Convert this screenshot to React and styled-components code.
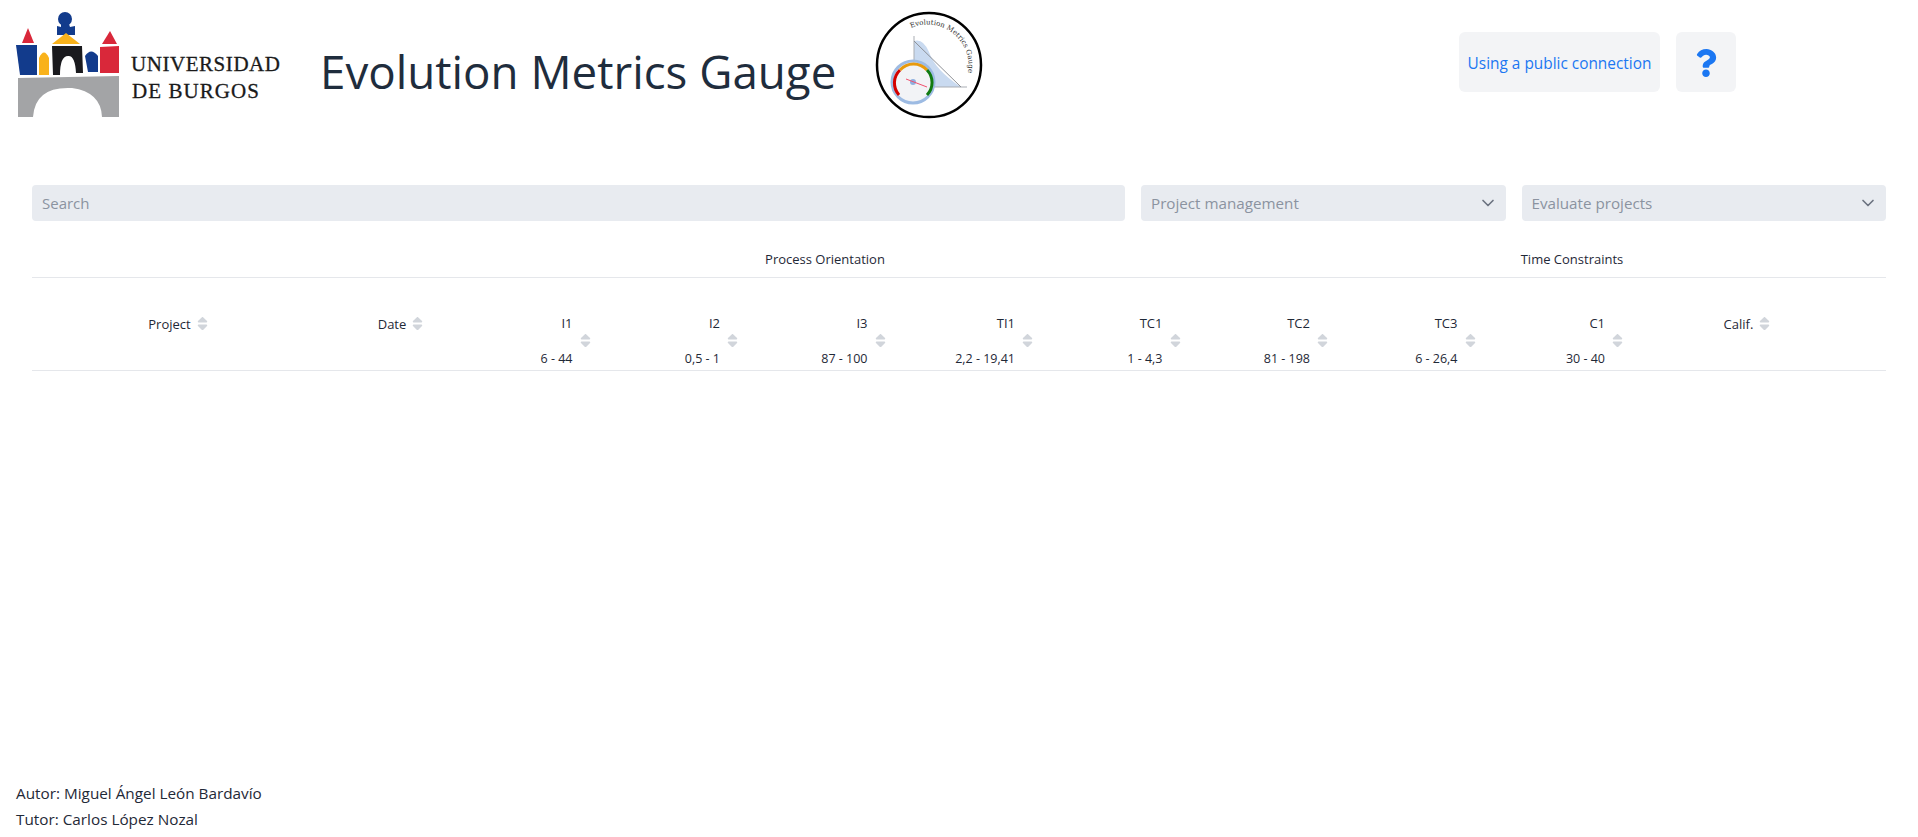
import React from "react";
import styled, { createGlobalStyle } from "styled-components";
import { FaSort, FaQuestion } from "react-icons/fa";
import { FiChevronDown } from "react-icons/fi";

const metrics = [
  { name: "I1", range: "6 - 44" },
  { name: "I2", range: "0,5 - 1" },
  { name: "I3", range: "87 - 100" },
  { name: "TI1", range: "2,2 - 19,41" },
  { name: "TC1", range: "1 - 4,3" },
  { name: "TC2", range: "81 - 198" },
  { name: "TC3", range: "6 - 26,4" },
  { name: "C1", range: "30 - 40" },
];

const UbuLogo = () => (
  <svg width="300" height="130" viewBox="0 0 300 130">
    <circle cx="65" cy="19" r="7" fill="#123b8c" />
    <path d="M61 24h8l1 3 5-1 0 9-18 0 0-9 4 1z" fill="#123b8c" />
    <path d="M52 44 L66 33 L80 44 Z" fill="#f9b21b" />
    <path d="M22 43 L28 28 L34 43 Z" fill="#d9283a" />
    <path d="M16 45 L37 45 L37 75 L20 75 Z" fill="#123b8c" />
    <path d="M39 75 L39 58 Q44 47 49 58 L49 75 Z" fill="#f9b21b" />
    <path d="M52 46 L82 46 L83 73 L76 73 Q75 55 68 56 Q60 56 60 75 L53 75 Z" fill="#1a1a1e" />
    <path d="M85 56 Q91 47 98 56 L98 72 L88 72 Z" fill="#123b8c" />
    <path d="M102 44 L110 31 L117 44 Z" fill="#d9283a" />
    <path d="M100 47 L119 46 L119 73 L100 73 Z" fill="#d9283a" />
    <path d="M18 78 L119 76 L119 117 L102 117 Q101 92 72 88 Q35 86 33 117 L18 117 Z" fill="#a3a4a6" />
    <LogoText x="131" y="71" textLength="149">UNIVERSIDAD</LogoText>
    <LogoText x="132" y="98" textLength="127">DE BURGOS</LogoText>
  </svg>
);

const GaugeLogo = () => (
  <svg width="130" height="130" viewBox="0 0 130 130">
    <defs>
      <path id="ringText" d="M50 28 A41 41 0 1 1 60 106" />
    </defs>
    <circle cx="68" cy="65" r="52" fill="#fff" stroke="#000" strokeWidth="2.5" />
    <text fontFamily="'DejaVu Serif', serif" fontSize="7" fill="#333">
      <textPath href="#ringText">Evolution Metrics Gauge</textPath>
    </text>
    <path d="M53 41 Q62 38 68 52 Q74 70 100 87 L53 87 Z" fill="#c9daf0" />
    <path d="M53 36 L53 87 L106 87" fill="none" stroke="#a9adb3" strokeWidth="1" />
    <path d="M53 41 L100 87" fill="none" stroke="#8d9096" strokeWidth="1" />
    <circle cx="52" cy="82" r="21" fill="#f2f3f6" stroke="#9dbbe3" strokeWidth="3" />
    <path d="M38 95 A18 18 0 0 1 39 70" fill="none" stroke="#d40000" strokeWidth="3" />
    <path d="M39 70 A18 18 0 0 1 66 70" fill="none" stroke="#e89a0c" strokeWidth="3" />
    <path d="M66 70 A18 18 0 0 1 66 95" fill="none" stroke="#107a10" strokeWidth="3" />
    <circle cx="52" cy="82" r="3" fill="#8fb0e0" />
    <path d="M45 79 L66 87" stroke="#f0506e" strokeWidth="1" />
  </svg>
);

const Sort = () => (
  <SortIcon>
    <FaSort />
  </SortIcon>
);

const App = () => {
  return (
    <Page>
      <GlobalStyle />
      <Header>
        <UbuLogo />
        <Title>Evolution Metrics Gauge</Title>
        <GaugeSlot>
          <GaugeLogo />
        </GaugeSlot>
        <Actions>
          <ActionButton>Using a public connection</ActionButton>
          <HelpButton>
            <FaQuestion />
          </HelpButton>
        </Actions>
      </Header>

      <Filters>
        <Search placeholder="Search" />
        <Select>
          Project management
          <FiChevronDown />
        </Select>
        <Select>
          Evaluate projects
          <FiChevronDown />
        </Select>
      </Filters>

      <Table>
        <GroupRow>
          <GroupLabel $offset={673}>Process Orientation</GroupLabel>
          <GroupLabel $offset={507}>Time Constraints</GroupLabel>
        </GroupRow>
        <HeadRow>
          <PlainHead>
            Project <Sort />
          </PlainHead>
          <PlainHead>
            Date <Sort />
          </PlainHead>
          {metrics.map((m) => (
            <MetricHead key={m.name}>
              <MetricName>{m.name}</MetricName>
              <Sort />
              <MetricRange>{m.range}</MetricRange>
            </MetricHead>
          ))}
          <PlainHead>
            Calif. <Sort />
          </PlainHead>
        </HeadRow>
      </Table>

      <Footer>
        <div>Autor: Miguel Ángel León Bardavío</div>
        <div>Tutor: Carlos López Nozal</div>
      </Footer>
    </Page>
  );
};

const GlobalStyle = createGlobalStyle`
  body {
    margin: 0;
    background: #fff;
    font-family: "Open Sans", "Noto Sans", sans-serif;
    color: #1f2937;
  }
`;

const Page = styled.div`
  display: flex;
  flex-direction: column;
  height: 837px;
  overflow: hidden;
`;

const Header = styled.header`
  display: flex;
  align-items: center;
  height: 130px;
  padding-right: 182px;
`;

const LogoText = styled.text`
  font-family: "Liberation Serif", serif;
  font-size: 21px;
  fill: #1a1a1a;
  stroke: #1a1a1a;
  stroke-width: 0.3px;
`;

const Title = styled.h1`
  margin: 12px 0 0 20px;
  width: 520px;
  font-size: 45.7px;
  line-height: 56px;
  font-weight: 400;
  white-space: nowrap;
  color: #1f2d3d;
`;

const GaugeSlot = styled.div`
  display: flex;
  margin-left: 21px;
`;

const Actions = styled.div`
  display: flex;
  gap: 16px;
  margin-left: auto;
  margin-top: -6px;
`;

const ActionButton = styled.button`
  width: 201px;
  height: 60px;
  padding: 2px 0 0;
  border: 0;
  border-radius: 6px;
  background: #f3f4f6;
  color: #1b77f2;
  font-family: inherit;
  font-size: 15.4px;
`;

const HelpButton = styled(ActionButton)`
  display: flex;
  align-items: center;
  justify-content: center;
  width: 60px;
  font-size: 28px;
`;

const Filters = styled.div`
  display: flex;
  gap: 16px;
  margin-top: 55px;
  padding: 0 32px;
`;

const Search = styled.input`
  flex: 1;
  min-width: 0;
  height: 36px;
  box-sizing: border-box;
  padding: 0 10px;
  border: 0;
  border-radius: 4px;
  background: #e8ebf0;
  font-family: inherit;
  font-size: 15px;

  &::placeholder {
    color: #8b93a0;
    opacity: 1;
  }
`;

const Select = styled.div`
  display: flex;
  align-items: center;
  justify-content: space-between;
  width: 364.5px;
  height: 36px;
  box-sizing: border-box;
  padding: 0 8px 0 10px;
  border-radius: 4px;
  background: #e8ebf0;
  color: #8b93a0;
  font-size: 15.2px;

  svg {
    width: 20px;
    height: 20px;
    color: #6b7280;
  }
`;

const Table = styled.div`
  padding: 0 32px;
`;

const GroupRow = styled.div`
  display: flex;
  align-items: flex-end;
  height: 56.5px;
  padding-bottom: 9px;
  border-bottom: 1px solid #e5e7eb;
  box-sizing: border-box;
`;

const GroupLabel = styled.div`
  width: 240px;
  margin-left: ${(p) => p.$offset}px;
  text-align: center;
  font-size: 13px;
`;

const HeadRow = styled.div`
  display: grid;
  grid-template-columns: 293px 152px repeat(8, 147.5px) 181px;
  height: 93px;
  box-sizing: border-box;
  border-bottom: 1px solid #e5e7eb;
  font-size: 13px;
`;

const PlainHead = styled.div`
  display: flex;
  align-items: center;
  justify-content: center;
  gap: 3px;
  padding-left: 2px;
`;

const MetricHead = styled.div`
  display: flex;
  flex-direction: column;
  align-items: flex-end;
  justify-content: flex-end;
  padding: 0 31px 2px 0;
`;

const MetricName = styled.div`
  margin: 0 21px 0 0;
  line-height: 17px;
`;

const MetricRange = styled.div`
  margin: 1px 21px 0 0;
  font-size: 12.5px;
  line-height: 18px;
`;

const SortIcon = styled.span`
  display: inline-flex;
  color: #d1d5db;
  font-size: 17px;
`;

const Footer = styled.footer`
  margin-top: auto;
  padding: 0 16px 5px;
  font-size: 15.3px;
  line-height: 26px;
`;

export default App;
